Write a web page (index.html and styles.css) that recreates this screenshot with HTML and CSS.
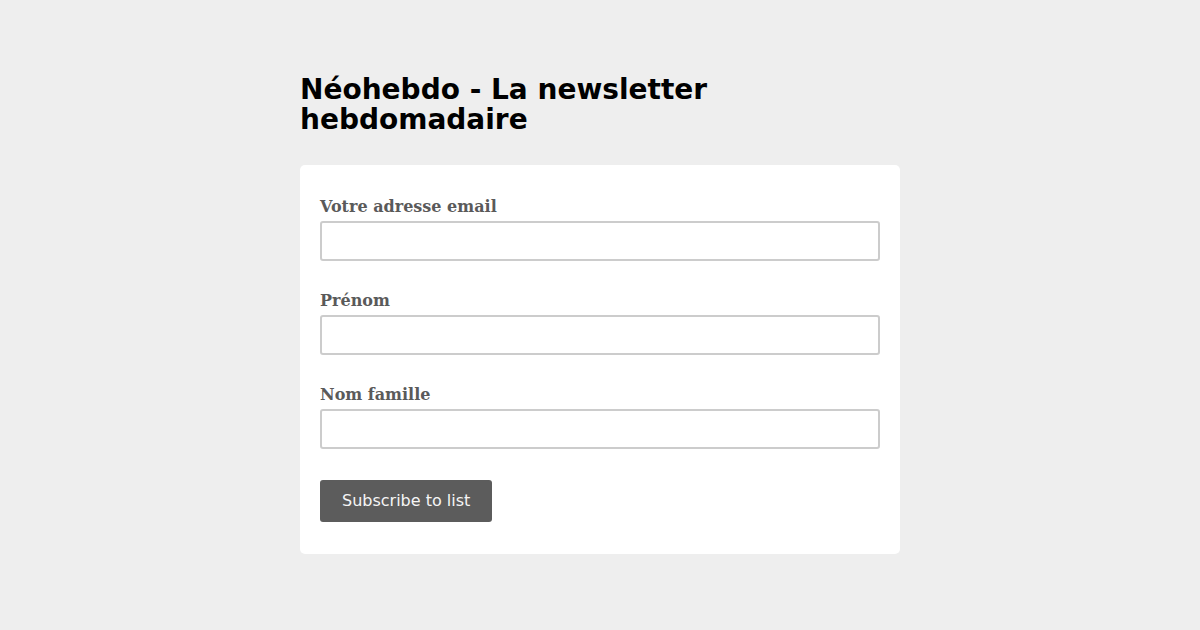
FILE: index.html
```html
<!DOCTYPE html>
<html lang="fr">
<head>
  <meta charset="UTF-8" />
  <meta name="viewport" content="width=device-width, initial-scale=1.0"/>
  <title>Néohebdo</title>
  <link rel="stylesheet" href="styles.css">
</head>
<body>
  <div class="wrap">
    <h1>Néohebdo - La newsletter<br>hebdomadaire</h1>

    <!-- Signup form -->
    <form class="card">
      <div class="field">
        <label for="email">Votre adresse email</label>
        <input type="email" id="email" name="email" />
      </div>
      <div class="field">
        <label for="prenom">Prénom</label>
        <input type="text" id="prenom" name="prenom" />
      </div>
      <div class="field">
        <label for="nom">Nom famille</label>
        <input type="text" id="nom" name="nom" />
      </div>
      <button type="submit" class="btn">Subscribe to list</button>
    </form>
  </div>
</body>
</html>
```

FILE: styles.css
```css
* {
  margin: 0;
  padding: 0;
  box-sizing: border-box;
}

body {
  background-color: #eeeeee;
  font-family: 'DejaVu Sans', sans-serif;
  color: #000;
}

.wrap {
  width: 600px;
  margin: 0 auto;
  padding-top: 75px;
}

h1 {
  font-size: 28px;
  line-height: 30px;
  font-weight: bold;
  margin-bottom: 30px;
}

.card {
  background-color: #fff;
  border-radius: 5px;
  padding: 32px 20px 32px;
}

.field {
  margin-bottom: 30px;
}

label {
  display: block;
  font-family: 'DejaVu Serif', serif;
  font-weight: bold;
  font-size: 16px;
  line-height: 20px;
  color: #5a5a5a;
  margin-bottom: 4px;
}

input {
  display: block;
  width: 100%;
  height: 40px;
  border: 2px solid #cccccc;
  border-radius: 3px;
  background: #fff;
  padding: 0 10px;
  font-size: 16px;
}

.btn {
  display: inline-block;
  margin-top: 1px;
  height: 42px;
  padding: 0 22px 1px;
  background-color: #5c5c5c;
  color: #f5f5f5;
  border: none;
  border-radius: 3px;
  font-family: 'DejaVu Sans', sans-serif;
  font-size: 16px;
  cursor: pointer;
}
```
